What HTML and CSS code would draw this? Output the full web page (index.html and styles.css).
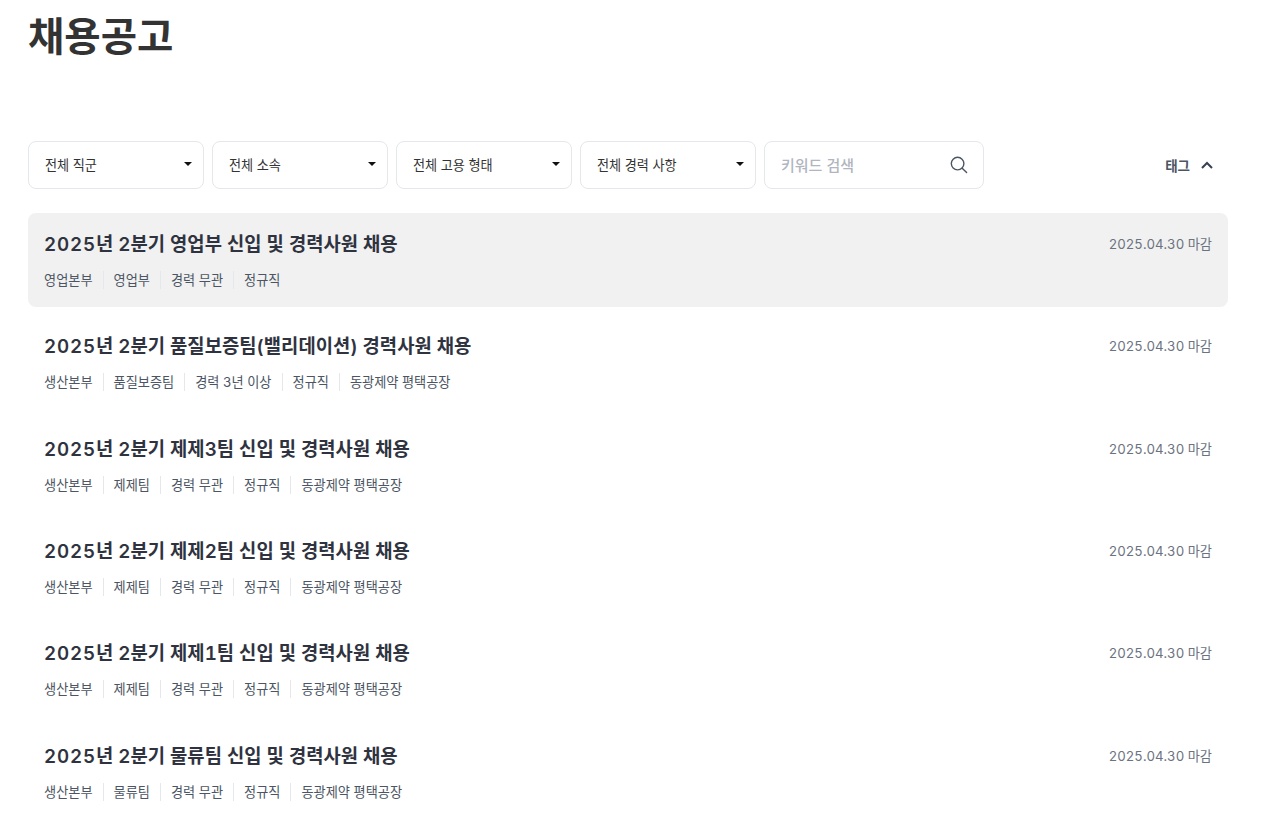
FILE: index.html
```html
<!DOCTYPE html>
<html lang="ko">
<head>
<meta charset="utf-8">
<title>채용공고</title>
<link rel="stylesheet" href="styles.css">
</head>
<body>
<main class="page">
  <h1 class="page-title">채용공고</h1>
  <div class="filters">
    <button class="select"><span>전체 직군</span><i class="caret"></i></button>
    <button class="select"><span>전체 소속</span><i class="caret"></i></button>
    <button class="select"><span>전체 고용 형태</span><i class="caret"></i></button>
    <button class="select"><span>전체 경력 사항</span><i class="caret"></i></button>
    <div class="search"><span class="placeholder">키워드 검색</span>
      <svg class="search-icon" width="20" height="20" viewBox="0 0 20 20" fill="none" stroke="#4b5563" stroke-width="1.4" stroke-linecap="round"><circle cx="8.6" cy="8.6" r="6.3"/><path d="M13.2 13.2 17.6 17.6"/></svg>
    </div>
    <button class="tag-toggle"><span>태그</span>
      <svg width="14" height="14" viewBox="0 0 14 14" fill="none" stroke="#374151" stroke-width="2"><path d="M2 10 7 5l5 5"/></svg>
    </button>
  </div>
  <ul class="jobs">
    <li class="job job-active">
      <div class="job-head"><h2 class="job-title"><span class="year">2025</span>년 2분기 영업부 신입 및 경력사원 채용</h2><span class="job-date">2025.04.30 마감</span></div>
      <ul class="meta"><li>영업본부</li><li>영업부</li><li>경력 무관</li><li>정규직</li></ul>
    </li>
    <li class="job">
      <div class="job-head"><h2 class="job-title"><span class="year">2025</span>년 2분기 품질보증팀(밸리데이션) 경력사원 채용</h2><span class="job-date">2025.04.30 마감</span></div>
      <ul class="meta"><li>생산본부</li><li>품질보증팀</li><li>경력 3년 이상</li><li>정규직</li><li>동광제약 평택공장</li></ul>
    </li>
    <li class="job">
      <div class="job-head"><h2 class="job-title"><span class="year">2025</span>년 2분기 제제3팀 신입 및 경력사원 채용</h2><span class="job-date">2025.04.30 마감</span></div>
      <ul class="meta"><li>생산본부</li><li>제제팀</li><li>경력 무관</li><li>정규직</li><li>동광제약 평택공장</li></ul>
    </li>
    <li class="job">
      <div class="job-head"><h2 class="job-title"><span class="year">2025</span>년 2분기 제제2팀 신입 및 경력사원 채용</h2><span class="job-date">2025.04.30 마감</span></div>
      <ul class="meta"><li>생산본부</li><li>제제팀</li><li>경력 무관</li><li>정규직</li><li>동광제약 평택공장</li></ul>
    </li>
    <li class="job">
      <div class="job-head"><h2 class="job-title"><span class="year">2025</span>년 2분기 제제1팀 신입 및 경력사원 채용</h2><span class="job-date">2025.04.30 마감</span></div>
      <ul class="meta"><li>생산본부</li><li>제제팀</li><li>경력 무관</li><li>정규직</li><li>동광제약 평택공장</li></ul>
    </li>
    <li class="job">
      <div class="job-head"><h2 class="job-title"><span class="year">2025</span>년 2분기 물류팀 신입 및 경력사원 채용</h2><span class="job-date">2025.04.30 마감</span></div>
      <ul class="meta"><li>생산본부</li><li>물류팀</li><li>경력 무관</li><li>정규직</li><li>동광제약 평택공장</li></ul>
    </li>
  </ul>
</main>
</body>
</html>
```
FILE: styles.css
```css
* { box-sizing: border-box; }
html, body { margin: 0; padding: 0; background: #fff; }
body {
  font-family: Inter, "Noto Sans CJK KR", "Liberation Sans", sans-serif;
  font-variant-numeric: tabular-nums;
  color: #333;
  overflow: hidden;
  height: 814px;
}
.page { width: 1200px; margin-left: 28px; }
.page-title {
  margin: 0;
  height: 141px;
  padding-top: 12px;
  font-size: 39.5px;
  line-height: 50px;
  font-weight: 700;
  color: #333;
}
.filters { display: flex; gap: 8px; align-items: center; height: 48px; margin-bottom: 24px; }
.select {
  width: 176px;
  height: 48px;
  display: flex;
  align-items: center;
  justify-content: space-between;
  padding: 0 11px 2px 16px;
  background: #fff;
  border: 1px solid #e5e7eb;
  border-radius: 8px;
  font: inherit;
  font-size: 13.15px;
  color: #333;
}
.caret {
  width: 0; height: 0;
  border-left: 4px solid transparent;
  border-right: 4px solid transparent;
  border-top: 4px solid #111;
}
.search {
  width: 220px;
  height: 48px;
  display: flex;
  align-items: center;
  justify-content: space-between;
  padding: 0 14px 0 16px;
  border: 1px solid #e5e7eb;
  border-radius: 8px;
}
.placeholder { font-size: 15px; font-weight: 500; color: #b0b5c0; position: relative; top: -1px; }
.search-icon { display: block; }
.tag-toggle {
  margin-left: auto;
  display: flex;
  align-items: center;
  gap: 10px;
  padding: 0 14px 0 0;
  border: 0;
  background: none;
  font: inherit;
  font-size: 13.5px;
  font-weight: 700;
  color: #4b5563;
}
.jobs { list-style: none; margin: 0; padding: 0; display: flex; flex-direction: column; gap: 8px; }
.job { height: 94.33px; padding: 16px; border-radius: 8px; }
.job-active { background: #f1f1f1; }
.job-head { display: flex; justify-content: space-between; align-items: center; height: 30px; }
.job-title { margin: 0; font-size: 18.8px; line-height: 30px; font-weight: 600; color: #2f3340; position: relative; top: 1px; }
.year { letter-spacing: 0.85px; }
.job-date { font-size: 13.2px; color: #6b7280; position: relative; top: -0.6px; }
.meta { list-style: none; margin: 11.05px 0 0; padding: 0; display: flex; align-items: center; height: 20px; }
.meta li {
  font-size: 13.2px;
  line-height: 18px;
  color: #4b5563;
  padding: 0 10px;
  border-left: 1px solid #e5e7eb;
}
.meta li:first-child { padding-left: 0; border-left: 0; }
```
